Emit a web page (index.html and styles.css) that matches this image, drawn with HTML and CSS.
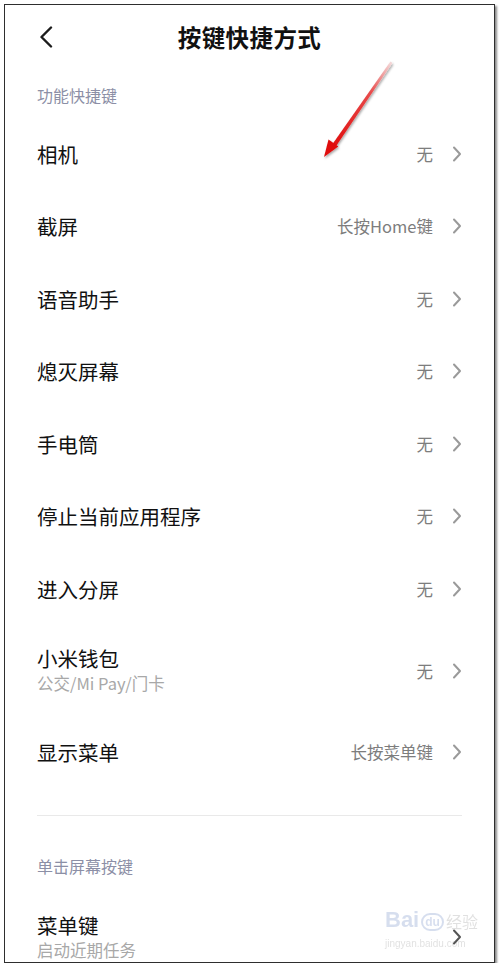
FILE: index.html
```html
<!DOCTYPE html>
<html lang="zh-CN">
<head>
<meta charset="utf-8">
<title>按键快捷方式</title>
<link rel="stylesheet" href="styles.css">
</head>
<body>
<div class="frame">
  <header class="topbar">
    <svg class="back" width="16" height="22" viewBox="0 0 16 22"><path d="M13 1.5 L3.5 11 L13 20.5" fill="none" stroke="#1c1c1c" stroke-width="2.4" stroke-linecap="round" stroke-linejoin="round"/></svg>
    <h1 class="title">按键快捷方式</h1>
    <span></span>
  </header>

  <div class="section-label first">功能快捷键</div>
  <ul class="list">
    <li class="row"><div class="text"><span class="name">相机</span></div><span class="value">无</span><svg class="chev" width="10" height="16" viewBox="0 0 10 16"><path d="M2 1.5 L8 8 L2 14.5" fill="none" stroke="#9a9a9a" stroke-width="2" stroke-linecap="round" stroke-linejoin="round"/></svg></li>
    <li class="row"><div class="text"><span class="name">截屏</span></div><span class="value">长按Home键</span><svg class="chev" width="10" height="16" viewBox="0 0 10 16"><path d="M2 1.5 L8 8 L2 14.5" fill="none" stroke="#9a9a9a" stroke-width="2" stroke-linecap="round" stroke-linejoin="round"/></svg></li>
    <li class="row"><div class="text"><span class="name">语音助手</span></div><span class="value">无</span><svg class="chev" width="10" height="16" viewBox="0 0 10 16"><path d="M2 1.5 L8 8 L2 14.5" fill="none" stroke="#9a9a9a" stroke-width="2" stroke-linecap="round" stroke-linejoin="round"/></svg></li>
    <li class="row"><div class="text"><span class="name">熄灭屏幕</span></div><span class="value">无</span><svg class="chev" width="10" height="16" viewBox="0 0 10 16"><path d="M2 1.5 L8 8 L2 14.5" fill="none" stroke="#9a9a9a" stroke-width="2" stroke-linecap="round" stroke-linejoin="round"/></svg></li>
    <li class="row"><div class="text"><span class="name">手电筒</span></div><span class="value">无</span><svg class="chev" width="10" height="16" viewBox="0 0 10 16"><path d="M2 1.5 L8 8 L2 14.5" fill="none" stroke="#9a9a9a" stroke-width="2" stroke-linecap="round" stroke-linejoin="round"/></svg></li>
    <li class="row"><div class="text"><span class="name">停止当前应用程序</span></div><span class="value">无</span><svg class="chev" width="10" height="16" viewBox="0 0 10 16"><path d="M2 1.5 L8 8 L2 14.5" fill="none" stroke="#9a9a9a" stroke-width="2" stroke-linecap="round" stroke-linejoin="round"/></svg></li>
    <li class="row"><div class="text"><span class="name">进入分屏</span></div><span class="value">无</span><svg class="chev" width="10" height="16" viewBox="0 0 10 16"><path d="M2 1.5 L8 8 L2 14.5" fill="none" stroke="#9a9a9a" stroke-width="2" stroke-linecap="round" stroke-linejoin="round"/></svg></li>
    <li class="row tall"><div class="text"><span class="name">小米钱包</span><span class="sub">公交/Mi Pay/门卡</span></div><span class="value">无</span><svg class="chev" width="10" height="16" viewBox="0 0 10 16"><path d="M2 1.5 L8 8 L2 14.5" fill="none" stroke="#9a9a9a" stroke-width="2" stroke-linecap="round" stroke-linejoin="round"/></svg></li>
    <li class="row"><div class="text"><span class="name">显示菜单</span></div><span class="value">长按菜单键</span><svg class="chev" width="10" height="16" viewBox="0 0 10 16"><path d="M2 1.5 L8 8 L2 14.5" fill="none" stroke="#9a9a9a" stroke-width="2" stroke-linecap="round" stroke-linejoin="round"/></svg></li>
  </ul>

  <div class="divider"></div>

  <div class="section-label second">单击屏幕按键</div>
  <ul class="list">
    <li class="row tall"><div class="text"><span class="name">菜单键</span><span class="sub">启动近期任务</span></div><span class="value"></span><svg class="chev" width="10" height="16" viewBox="0 0 10 16"><path d="M2 1.5 L8 8 L2 14.5" fill="none" stroke="#555" stroke-width="2" stroke-linecap="round" stroke-linejoin="round"/></svg></li>
  </ul>

  <svg class="arrow" width="489" height="200" viewBox="0 0 489 200">
    <defs>
      <linearGradient id="shaft" x1="385" y1="58" x2="328" y2="140" gradientUnits="userSpaceOnUse">
        <stop offset="0" stop-color="#f4d6d6"/>
        <stop offset="0.35" stop-color="#e84a4a"/>
        <stop offset="1" stop-color="#e01010"/>
      </linearGradient>
      <filter id="sh" x="-20%" y="-20%" width="140%" height="140%">
        <feDropShadow dx="1" dy="1.5" stdDeviation="1" flood-color="#000" flood-opacity="0.35"/>
      </filter>
    </defs>
    <g filter="url(#sh)">
      <polygon points="385.4,56.6 387.4,58.0 331.3,140.8 327.9,138.4" fill="url(#shaft)"/>
      <polygon points="319,152 323.5,134.5 333.3,141.4" fill="#e01010"/>
    </g>
  </svg>

  <div class="watermark">
    <div class="wm-top"><span class="wm-bai">Bai</span><span class="wm-paw">du</span><span class="wm-jy">经验</span></div>
    <div class="wm-url">jingyan.baidu.com</div>
  </div>
</div>
</body>
</html>
```
FILE: styles.css
```css
* { box-sizing: border-box; }
html, body { margin: 0; padding: 0; background: #ffffff; }
body {
  font-family: "Noto Sans CJK SC", "Noto Sans", sans-serif;
  color: #1a1a1a;
}
.frame {
  position: relative;
  margin: 4px 0 0 4px;
  width: 491px;
  height: 959px;
  border: 1px solid #2e2e2e;
  background: #fff;
  overflow: hidden;
  box-shadow: 2px 2px 2px rgba(0,0,0,0.45);
}
.topbar {
  display: grid;
  grid-template-columns: 1fr auto 1fr;
  align-items: center;
  height: 64px;
  padding: 0 32px;
}
.back { display: block; margin-left: 1px; }
.title {
  margin: 0;
  font-size: 23.5px;
  font-weight: 700;
  line-height: 30px;
  color: #111;
  letter-spacing: 0.4px;
}
.section-label {
  padding: 0 32px;
  font-size: 16px;
  line-height: 20px;
  color: #8c8fa6;
}
.section-label.first { padding-top: 16px; padding-bottom: 12.5px; }
.section-label.second { padding-top: 40.5px; padding-bottom: 15.5px; }
.list { list-style: none; margin: 0; padding: 0; }
.row {
  display: flex;
  align-items: center;
  height: 72.5px;
  padding: 0 32px;
}
.row.tall { height: 91px; }
.text { flex: 1; display: flex; flex-direction: column; }
.name { font-size: 20.5px; line-height: 24px; color: #111; }
.row.tall .name { line-height: 23px; }
.row.tall .sub { margin-top: 2px; }
.sub { font-size: 16.5px; line-height: 22px; color: #a8a8a8; }
.value { font-size: 16.5px; color: #7d7d7d; line-height: 20px; }
.chev { display: block; margin-left: 19px; }
.divider {
  margin: 26px 32px 0;
  height: 1px;
  background: #e9e9e9;
}
.arrow { position: absolute; left: 0; top: 0; pointer-events: none; }
.watermark {
  position: absolute;
  left: 380px;
  top: 896px;
  width: 100px;
  opacity: 0.2;
  color: #6a6a6a;
  font-family: "Liberation Sans", sans-serif;
}
.wm-top { display: flex; align-items: flex-end; gap: 2px; height: 30px; white-space: nowrap; }
.wm-bai { font-size: 22px; font-weight: 700; line-height: 22px; color: #3a5fb0; }
.wm-paw { font-size: 12px; font-weight: 700; border: 2px solid #3a5fb0; border-radius: 10px; padding: 0 2px; line-height: 14px; color: #3a5fb0; }
.wm-jy { font-family: "Noto Sans CJK SC", sans-serif; font-size: 16px; line-height: 20px; }
.wm-url { font-size: 10px; line-height: 14px; margin-top: 6px; white-space: nowrap; }
```
